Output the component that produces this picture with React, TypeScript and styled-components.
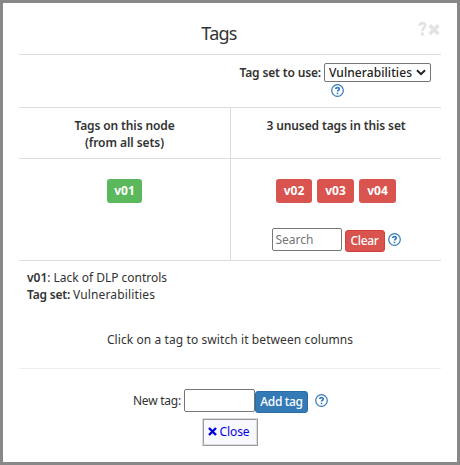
import React from 'react';
import styled, { createGlobalStyle } from 'styled-components';

const GlobalStyle = createGlobalStyle`
  * { box-sizing: border-box; }
  body { margin: 0; background: #888; }
  button, input { font: inherit; margin: 0; }
`;

const Dialog = styled.main`
  width: 460px;
  height: 465px;
  padding: 0 16px;
  border: 3px solid #888;
  background: #fff;
  color: #333;
  font: 400 12px/17px 'Noto Sans', sans-serif;
  white-space: nowrap;
`;

const Header = styled.header`
  position: relative;
  display: flex;
  justify-content: center;
  height: 52px;
  padding: 17px 22px 0 0;
  border-bottom: 1px solid #ddd;
`;

const Title = styled.h1`
  margin: 0;
  font-size: 18px;
  font-weight: 400;
  line-height: 27px;
  letter-spacing: -0.75px;
`;

const WindowActions = styled.div`
  position: absolute;
  top: 18px;
  right: 1px;
  display: flex;
`;

const SetRow = styled.section`
  display: flex;
  justify-content: flex-end;
  gap: 3px;
  height: 53px;
  padding: 8px 10px 0 0;
  border-bottom: 1px solid #ddd;
`;

const Strong = styled.span<{ $spacing?: number }>`
  font-weight: 600;
  letter-spacing: ${(p) => p.$spacing ?? 0}px;
`;

const SetLabel = styled(Strong)`
  padding-top: 1px;
`;

const Picker = styled.div`
  display: flex;
  flex-direction: column;
  gap: 1px;
`;

const SelectBox = styled.button`
  display: flex;
  align-items: center;
  justify-content: space-between;
  width: 107px;
  height: 19px;
  padding: 0 4px 1px;
  border: 1px solid #767676;
  border-radius: 2px;
  background: #fff;
  color: #222;
  font-weight: 500;
  line-height: 15px;
  letter-spacing: 0.08px;
`;

const PickerHelp = styled.div`
  display: flex;
  padding-left: 7px;
`;

const Columns = styled.section`
  display: grid;
  grid-template-columns: 211px 211px;
`;

const Column = styled.div`
  display: flex;
  flex-direction: column;
  & + & { border-left: 1px solid #ddd; }
`;

const ColumnHead = styled.div`
  display: flex;
  flex-direction: column;
  align-items: center;
  height: 51px;
  padding-top: 9px;
  border-bottom: 1px solid #ddd;
`;

const ColumnBody = styled.div`
  display: flex;
  flex-direction: column;
  align-items: center;
  height: 102px;
  padding-top: 20px;
  border-bottom: 1px solid #ddd;
`;

const TagList = styled.div`
  display: flex;
  gap: 5px;
  height: 49px;
`;

const Tag = styled.button<{ $used?: boolean; $width: number }>`
  width: ${(p) => p.$width}px;
  height: 24px;
  padding: 0 0 1px;
  border: 0;
  border-radius: 3px;
  background: ${(p) => (p.$used ? '#5cb85c' : '#d9534f')};
  color: #fff;
  font-weight: 700;
  line-height: 22px;
`;

const SearchRow = styled.div`
  display: flex;
  align-items: flex-start;
`;

const Field = styled.input<{ $width: number; $gap?: number }>`
  width: ${(p) => p.$width}px;
  height: 23px;
  margin-right: ${(p) => p.$gap ?? 0}px;
  padding: 0 3px;
  border: 1px solid #767676;
  border-radius: 2px;
  background: #fff;
  color: #333;
  &::placeholder { color: #757575; opacity: 1; }
`;

const ActionButton = styled.button<{ $tone: 'danger' | 'primary'; $width: number }>`
  width: ${(p) => p.$width}px;
  height: 22px;
  margin-top: 2px;
  padding: 0 0 1px;
  border: 1px solid ${(p) => (p.$tone === 'danger' ? '#d43f3a' : '#2e6da4')};
  border-radius: 3px;
  background: ${(p) => (p.$tone === 'danger' ? '#d9534f' : '#337ab7')};
  color: #fff;
  font-weight: 500;
  line-height: 18px;
  letter-spacing: -0.35px;
`;

const HelpGlyph = styled.svg<{ $left?: number; $top?: number }>`
  display: block;
  flex: none;
  width: 13px;
  height: 13px;
  margin: ${(p) => p.$top ?? 0}px 0 0 ${(p) => p.$left ?? 0}px;
`;

const Details = styled.section`
  height: 70px;
  padding: 8px 8px 0;
`;

const Value = styled.span<{ $spacing: number }>`
  letter-spacing: ${(p) => p.$spacing}px;
`;

const Hint = styled.p`
  height: 38px;
  margin: 0;
  border-bottom: 1px solid #eee;
  text-align: center;
  letter-spacing: 0.09px;
`;

const NewTagRow = styled.section`
  display: flex;
  height: 49px;
  padding: 20px 0 0 114px;
`;

const NewTagLabel = styled.label`
  width: 51px;
  padding-top: 3px;
  letter-spacing: -0.25px;
`;

const Footer = styled.footer`
  display: flex;
  justify-content: center;
`;

const CloseFrame = styled.div`
  margin-right: 1px;
  border: 1px solid;
  border-color: #ddd #999 #999 #ddd;
`;

const CloseButton = styled.button`
  display: flex;
  align-items: center;
  gap: 3px;
  width: 54px;
  height: 26px;
  padding: 0 4px 1px;
  border: 1px solid;
  border-color: #999 #ddd #ddd #999;
  background: #f8f8ff;
  color: #0000e0;
  letter-spacing: -0.1px;
`;

const Help = ({ left, top }: { left?: number; top?: number }) => (
  <HelpGlyph $left={left} $top={top} viewBox="0 0 13 13" fill="none" stroke="#337ab7">
    <circle cx="6.5" cy="6.5" r="5.8" strokeWidth="1.2" />
    <path d="M4.6 5C4.8 3.2 8.4 3.1 8.3 5C8.3 6.3 6.5 6.2 6.5 7.6" strokeWidth="1.6" />
    <path d="M6.5 8.7V10.2" strokeWidth="1.6" />
  </HelpGlyph>
);

const WindowIcons = () => (
  <svg width="22" height="18" viewBox="0 0 22 18" fill="none" stroke="#e3e3e3">
    <path d="M1.4 4.8C2.3 1.1 7.5 1.4 7.1 4.6C6.9 6.6 4.5 6.8 4.4 9.8" strokeWidth="2.7" />
    <path d="M4.4 11.5V14.4" strokeWidth="3" />
    <path d="M11.6 4.2L20.4 13M20.4 4.2L11.6 13" strokeWidth="3.7" />
  </svg>
);

const unusedTags = [
  { name: 'v02', width: 36 },
  { name: 'v03', width: 37 },
  { name: 'v04', width: 37 },
];

export default function App() {
  return (
    <>
      <GlobalStyle />
      <Dialog>
        <Header>
          <Title>Tags</Title>
          <WindowActions>
            <WindowIcons />
          </WindowActions>
        </Header>
        <SetRow>
          <SetLabel $spacing={-0.15}>Tag set to use:</SetLabel>
          <Picker>
            <SelectBox>
              Vulnerabilities
              <svg width="10" height="7" viewBox="0 0 10 7" fill="none" stroke="#222" strokeWidth="2">
                <path d="M1 1.2L5 5.2L9 1.2" />
              </svg>
            </SelectBox>
            <PickerHelp>
              <Help top={1} />
            </PickerHelp>
          </Picker>
        </SetRow>
        <Columns>
          <Column>
            <ColumnHead>
              <Strong $spacing={-0.12}>Tags on this node</Strong>
              <Strong $spacing={-0.05}>(from all sets)</Strong>
            </ColumnHead>
            <ColumnBody>
              <TagList>
                <Tag $used $width={35}>v01</Tag>
              </TagList>
            </ColumnBody>
          </Column>
          <Column>
            <ColumnHead>
              <Strong $spacing={-0.11}>3 unused tags in this set</Strong>
            </ColumnHead>
            <ColumnBody>
              <TagList>
                {unusedTags.map((tag) => (
                  <Tag key={tag.name} $width={tag.width}>{tag.name}</Tag>
                ))}
              </TagList>
              <SearchRow>
                <Field $width={70} $gap={3} placeholder="Search" />
                <ActionButton $tone="danger" $width={40}>Clear</ActionButton>
                <Help left={3} top={5} />
              </SearchRow>
            </ColumnBody>
          </Column>
        </Columns>
        <Details>
          <div>
            <Strong>v01</Strong>
            <Value $spacing={-0.02}>: Lack of DLP controls</Value>
          </div>
          <div>
            <Strong $spacing={-0.2}>Tag set: </Strong>
            <Value $spacing={0.15}>Vulnerabilities</Value>
          </div>
        </Details>
        <Hint>Click on a tag to switch it between columns</Hint>
        <NewTagRow>
          <NewTagLabel>New tag:</NewTagLabel>
          <Field $width={71} />
          <ActionButton $tone="primary" $width={53}>Add tag</ActionButton>
          <Help left={7} top={5} />
        </NewTagRow>
        <Footer>
          <CloseFrame>
            <CloseButton>
              <svg width="9" height="9" viewBox="0 0 9 9" fill="none" stroke="#0000e0" strokeWidth="2.4">
                <path d="M1 1L8 8M8 1L1 8" />
              </svg>
              Close
            </CloseButton>
          </CloseFrame>
        </Footer>
      </Dialog>
    </>
  );
}
